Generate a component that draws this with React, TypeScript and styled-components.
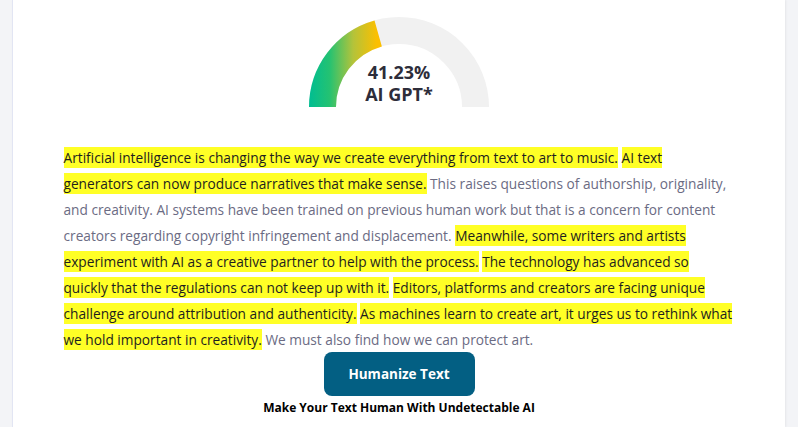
import React from "react";
import styled, { createGlobalStyle } from "styled-components";

const Global = createGlobalStyle`
  html, body { margin: 0; padding: 0; background: #f3f4f7; }
  body { font-family: "Open Sans", "Noto Sans", sans-serif; }
`;

const Page = styled.div`
  display: flex;
  justify-content: center;
  padding: 0 13px 0 12px;
  min-height: 427px;
  box-sizing: border-box;
`;

const Panel = styled.main`
  flex: 1;
  background: #ffffff;
  border-left: 1px solid #e2e5f3;
  box-shadow: 1px 0 2px rgba(0, 0, 0, 0.06);
  display: flex;
  flex-direction: column;
  align-items: center;
  padding-top: 17px;
`;

const GaugeBox = styled.div`
  position: relative;
  width: 180px;
  height: 90px;
`;

const GaugeLabel = styled.div`
  position: absolute;
  left: 0;
  right: 0;
  top: 44px;
  text-align: center;
  font-family: "Open Sans", sans-serif;
  font-weight: 700;
  font-size: 18px;
  line-height: 22px;
  color: #2d2d3a;
`;

const Text = styled.p`
  margin: 38px 0 0;
  width: 671px;
  font-family: "Open Sans", "Noto Sans", sans-serif;
  font-size: 13.7px;
  line-height: 26px;
  color: #6b6b83;
`;

const Mark = styled.span`
  background: #ffff26;
  color: #1e1e1e;
  padding: 1px 0;
`;

const Button = styled.button`
  width: 151px;
  height: 44px;
  margin-top: -1px;
  border: none;
  border-radius: 8px;
  background: #035f83;
  color: #ffffff;
  font-family: "Open Sans", sans-serif;
  font-weight: 700;
  font-size: 13.5px;
  cursor: pointer;
`;

const Caption = styled.div`
  margin-top: 4px;
  font-family: "Open Sans", sans-serif;
  font-weight: 700;
  font-size: 12px;
  line-height: 16px;
  color: #000;
`;

function Gauge({ value }: { value: number }) {
  const cx = 90, cy = 90, r = 76.5, sw = 27;
  const a = Math.PI - (value / 100) * Math.PI;
  const ex = cx + r * Math.cos(a);
  const ey = cy - r * Math.sin(a);
  return (
    <svg width="180" height="90" viewBox="0 0 180 90">
      <defs>
        <linearGradient id="g" x1="0" y1="0" x2="68" y2="0" gradientUnits="userSpaceOnUse">
          <stop offset="0" stopColor="#00bd92" />
          <stop offset="0.3" stopColor="#24c272" />
          <stop offset="0.65" stopColor="#b4c33a" />
          <stop offset="1" stopColor="#fcbf00" />
        </linearGradient>
      </defs>
      <path d={`M ${cx - r} ${cy} A ${r} ${r} 0 0 1 ${cx + r} ${cy}`} fill="none" stroke="#f1f1f1" strokeWidth={sw} />
      <path d={`M ${cx - r} ${cy} A ${r} ${r} 0 0 1 ${ex} ${ey}`} fill="none" stroke="url(#g)" strokeWidth={sw} />
    </svg>
  );
}

export default function App() {
  return (
    <>
      <Global />
      <Page>
        <Panel>
          <GaugeBox>
            <Gauge value={41.23} />
            <GaugeLabel>
              41.23%
              <br />
              AI GPT*
            </GaugeLabel>
          </GaugeBox>
          <Text>
            <Mark>Artificial intelligence is changing the way we create everything from text to art to music.</Mark>{" "}
            <Mark>AI text generators can now produce narratives that make sense.</Mark>{" "}
            This raises questions of authorship, originality, and creativity. AI systems have been trained on previous human work but that is a concern for content creators regarding copyright infringement and displacement.{" "}
            <Mark>Meanwhile, some writers and artists experiment with AI as a creative partner to help with the process.</Mark>{" "}
            <Mark>The technology has advanced so quickly that the regulations can not keep up with it.</Mark>{" "}
            <Mark>Editors, platforms and creators are facing unique challenge around attribution and authenticity.</Mark>{" "}
            <Mark>As machines learn to create art, it urges us to rethink what we hold important in creativity.</Mark>{" "}
            We must also find how we can protect art.
          </Text>
          <Button>Humanize Text</Button>
          <Caption>Make Your Text Human With Undetectable AI</Caption>
        </Panel>
      </Page>
    </>
  );
}
